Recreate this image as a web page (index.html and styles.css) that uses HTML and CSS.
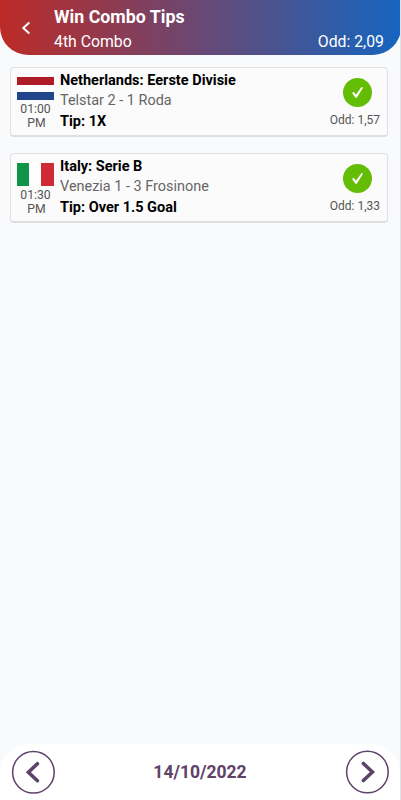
FILE: index.html
```html
<!DOCTYPE html>
<html lang="en">
<head>
  <meta charset="UTF-8" />
  <meta name="viewport" content="width=device-width, initial-scale=1.0"/>
  <title>Win Combo Tips</title>
  <link rel="stylesheet" href="styles.css">
</head>
<body>

<header>
  <svg class="back" viewBox="0 0 10 14" width="10" height="14"><path d="M8.3 1.4 L2.3 7 L8.3 12.6" /></svg>
  <div class="titles">
    <h1>Win Combo Tips</h1>
    <div class="subtitle">
      <span>4th Combo</span>
      <span>Odd: 2,09</span>
    </div>
  </div>
</header>

<main>
  <section class="card">
    <div class="when">
      <div class="flag netherlands"></div>
      <p>01:00</p>
      <p class="period">PM</p>
    </div>
    <div class="match">
      <h2>Netherlands: Eerste Divisie</h2>
      <p>Telstar 2 - 1 Roda</p>
      <h2>Tip: 1X</h2>
    </div>
    <div class="result">
      <svg viewBox="0 0 29 29" width="29" height="29"><circle cx="14.5" cy="14.5" r="14.5" /><path d="M9 15.1 L10.8 13.8 L12.9 16.7 L18.5 9 L20 9.8 L13.8 19.8 L12.5 19.8 Z" /></svg>
      <p>Odd: 1,57</p>
    </div>
  </section>

  <section class="card">
    <div class="when">
      <div class="flag italy"></div>
      <p>01:30</p>
      <p class="period">PM</p>
    </div>
    <div class="match">
      <h2>Italy: Serie B</h2>
      <p>Venezia 1 - 3 Frosinone</p>
      <h2>Tip: Over 1.5 Goal</h2>
    </div>
    <div class="result">
      <svg viewBox="0 0 29 29" width="29" height="29"><circle cx="14.5" cy="14.5" r="14.5" /><path d="M9 15.1 L10.8 13.8 L12.9 16.7 L18.5 9 L20 9.8 L13.8 19.8 L12.5 19.8 Z" /></svg>
      <p>Odd: 1,33</p>
    </div>
  </section>
</main>

<footer>
  <svg viewBox="0 0 44 44" width="44" height="44"><circle cx="22.4" cy="22.2" r="20.8" /><path d="M26.4 13.7 L17.4 22.2 L26.4 30.7" /></svg>
  <span>14/10/2022</span>
  <svg viewBox="0 0 44 44" width="44" height="44"><circle cx="22.4" cy="22" r="20.8" /><path d="M18.4 13.5 L27.4 22 L18.4 30.5" /></svg>
</footer>

</body>
</html>
```

FILE: styles.css
```css
* {
  box-sizing: border-box;
}
body {
  font-family: Roboto, "Liberation Sans", sans-serif;
  margin: 0;
  height: 100vh;
  display: flex;
  flex-direction: column;
  background-color: #f8fafc;
  border-right: 1px solid #dfe1e4;
}
h1, h2, p {
  margin: 0;
}
header {
  display: flex;
  flex: none;
  height: 55px;
  margin-right: -1px;
  padding: 6px 17px 0 21px;
  border-radius: 0 0 28px 28px;
  background: linear-gradient(90deg, #bd2b27, #1565c0);
  color: white;
}
.back {
  margin-top: 15px;
  fill: none;
  stroke: white;
  stroke-width: 2;
}
.titles {
  flex: 1;
  margin-left: 23px;
}
h1 {
  font-size: 17.8px;
  line-height: 21px;
  font-weight: bold;
}
.subtitle {
  display: flex;
  justify-content: space-between;
  margin-top: 5px;
  font-size: 15.8px;
  line-height: 19px;
}
main {
  flex: 1;
  display: flex;
  flex-direction: column;
  gap: 16px;
  padding: 12px 12px 0 10px;
}
.card {
  display: flex;
  height: 70px;
  padding: 4px 7px 0 6px;
  border: 1px solid #dfe1e3;
  border-bottom: 2px solid #dcdee0;
  border-radius: 4px;
  background-color: #fbfbfb;
}
.when {
  width: 37px;
  padding-top: 5px;
  text-align: center;
  font-size: 12.2px;
  line-height: 14px;
  color: #555;
}
.period {
  padding-left: 2px;
}
.flag {
  height: 23px;
  margin-bottom: 2px;
}
.netherlands {
  background: linear-gradient(#ae1c28 0 33%, white 33% 66%, #21468b 66%);
}
.italy {
  background: linear-gradient(90deg, #109448 0 33%, white 33% 66%, #cf2b37 66%);
}
.match {
  flex: 1;
  margin-left: 6px;
  font-size: 14.45px;
  line-height: 17px;
  color: #666;
}
.match h2 {
  font-size: 14.5px;
  font-weight: bold;
  color: black;
}
.match p {
  margin: 3px 0 4px;
}
.result {
  display: flex;
  flex-direction: column;
  align-items: flex-end;
  padding-top: 6px;
  font-size: 12px;
  line-height: 15px;
  color: #555;
}
.result svg {
  margin-right: 8px;
}
.result p {
  margin-top: 6px;
}
.result circle {
  fill: #64bd05;
}
.result path {
  fill: white;
}
footer {
  display: flex;
  flex: none;
  justify-content: space-between;
  align-items: center;
  height: 56px;
  padding: 0 11px;
  border-radius: 28px 28px 0 0;
  background-color: white;
  color: #5e4268;
  font-size: 17.5px;
  font-weight: bold;
}
footer svg {
  fill: none;
  stroke: #5e4268;
}
footer circle {
  stroke-width: 1.5;
}
footer path {
  stroke-width: 3.6;
  stroke-linecap: round;
}
```
